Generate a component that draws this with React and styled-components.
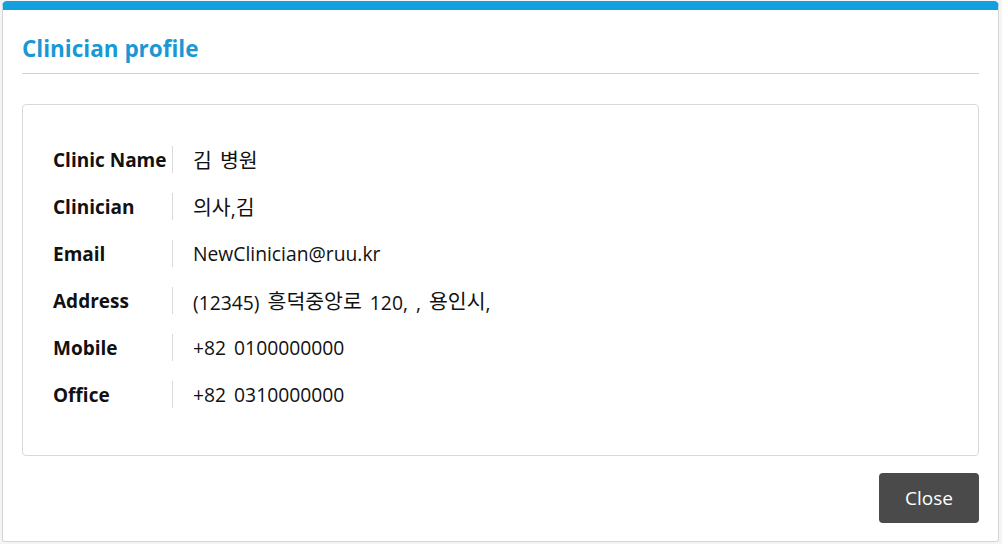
import React from 'react';
import styled, { createGlobalStyle } from 'styled-components';

const GlobalStyle = createGlobalStyle`
    html, body {
        margin: 0;
        padding: 0;
        background: #f4f4f4;
    }
    body {
        font-family: "Open Sans", "Noto Sans CJK KR", sans-serif;
        color: #111;
    }
`;

const Page = styled.div`
    width: 1002px;
    height: 544px;
    padding: 1px 3px 2px 2px;
    box-sizing: border-box;
`;

const Modal = styled.div`
    height: 100%;
    background: #fff;
    border: 1px solid #d6d6d6;
    border-top: 9px solid #14a0de;
    border-radius: 5px 5px 3px 3px;
    box-sizing: border-box;
    padding: 0 19px;
    display: flex;
    flex-direction: column;
`;

const Header = styled.div`
    border-bottom: 1px solid #d2d2d2;
    padding: 24px 0 9px 0;
`;

const Title = styled.h2`
    margin: 0;
    font-size: 22.5px;
    line-height: 30px;
    font-weight: 700;
    color: #1a98d5;
`;

const Panel = styled.div`
    margin-top: 30px;
    border: 1px solid #d9d9d9;
    border-radius: 4px;
    padding: 31px 0 37px 30px;
`;

const Row = styled.div`
    display: grid;
    grid-template-columns: 119px 1fr;
    align-items: center;
    height: 47px;
`;

const Label = styled.div`
    font-size: 19px;
    font-weight: 700;
    color: #111;
    white-space: nowrap;
`;

const Value = styled.div`
    border-left: 1px solid #d9d9d9;
    height: 27px;
    line-height: 27px;
    padding-left: 20px;
    font-size: 19.3px;
    word-spacing: 3px;
    color: #111;
    white-space: pre;
`;

const Hangul = styled.span`
    font-family: "Noto Sans CJK KR", sans-serif;
    font-size: 20.5px;
    vertical-align: 1px;
`;

const Footer = styled.div`
    display: flex;
    justify-content: flex-end;
    padding-top: 17px;
`;

const CloseButton = styled.button`
    width: 100px;
    height: 50px;
    border: none;
    border-radius: 4px;
    background: #4a4a4a;
    color: #fff;
    font-family: "Open Sans", sans-serif;
    font-size: 19px;
    cursor: pointer;
`;

const rows = [
    ['Clinic Name', '김 병원'],
    ['Clinician', '의사,김'],
    ['Email', 'NewClinician@ruu.kr'],
    ['Address', '(12345) 흥덕중앙로 120, , 용인시,'],
    ['Mobile', '+82 0100000000'],
    ['Office', '+82 0310000000'],
];

// hangul runs get the CJK face, the rest stays in the latin face
function renderText(text) {
    return text.split(/([\uAC00-\uD7A3]+)/).map((part, i) =>
        /[\uAC00-\uD7A3]/.test(part) ? <Hangul key={i}>{part}</Hangul> : part
    );
}

export default function App() {
    return (
        <>
            <GlobalStyle />
            <Page>
                <Modal>
                    <Header>
                        <Title>Clinician profile</Title>
                    </Header>
                    <Panel>
                        {rows.map(([label, value]) => (
                            <Row key={label}>
                                <Label>{label}</Label>
                                <Value>{renderText(value)}</Value>
                            </Row>
                        ))}
                    </Panel>
                    <Footer>
                        <CloseButton>Close</CloseButton>
                    </Footer>
                </Modal>
            </Page>
        </>
    );
}
